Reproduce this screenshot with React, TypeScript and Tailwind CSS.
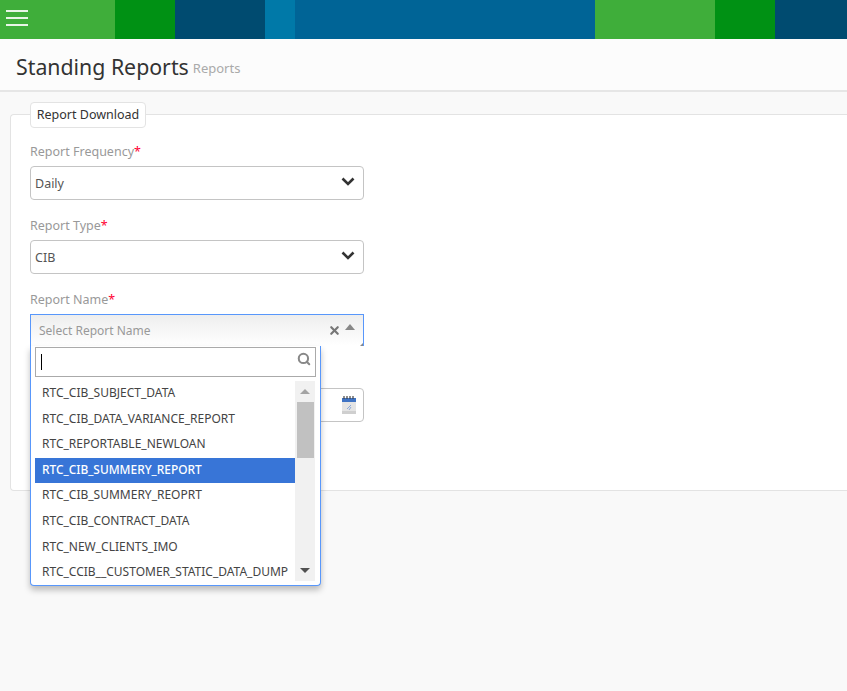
import { Search, X } from 'lucide-react';

const reports = [
  'RTC_CIB_SUBJECT_DATA',
  'RTC_CIB_DATA_VARIANCE_REPORT',
  'RTC_REPORTABLE_NEWLOAN',
  'RTC_CIB_SUMMERY_REPORT',
  'RTC_CIB_SUMMERY_REOPRT',
  'RTC_CIB_CONTRACT_DATA',
  'RTC_NEW_CLIENTS_IMO',
  'RTC_CCIB__CUSTOMER_STATIC_DATA_DUMP',
];

function Label({ text }: { text: string }) {
  return (
    <div className="h-[20px] pt-[1px] text-[12.5px] leading-[20px] text-[#999999]">
      {text}
      <span className="text-[#ff0033]">*</span>
    </div>
  );
}

function SelectBox({ value }: { value: string }) {
  return (
    <div className="mt-[5px] flex h-[34px] w-[334px] items-center justify-between rounded-[4px] border border-[#c4c4c4] bg-white pl-[4px] pr-[8px] text-[12.5px] text-[#555555]">
      <span className="mt-[2px]">{value}</span>
      <svg width="14" height="9" viewBox="0 0 14 9" className="-mt-[3px]">
        <path d="M1.5 1.5L7 7l5.5-5.5" fill="none" stroke="#333333" strokeWidth="2.6" />
      </svg>
    </div>
  );
}

function CalendarIcon() {
  return (
    <svg width="14" height="18" viewBox="0 0 14 18">
      <rect x="0" y="3" width="14" height="15" fill="#e4e4e4" />
      <rect x="0" y="2" width="14" height="4" fill="#3f73c4" />
      <path d="M2 0v3M5 0v3M8 0v3M11 0v3" stroke="#444444" strokeWidth="1.2" />
      <path d="M5 13l4-4M7 14l2-3" stroke="#8aa8d8" strokeWidth="1" />
      <rect x="0" y="15" width="14" height="3" fill="#cfcfcf" />
    </svg>
  );
}

export default function App() {
  return (
    <div className="min-h-[691px] bg-[#f9f9f9] font-['Noto_Sans',sans-serif]">
      <div className="flex h-[39px] w-full">
        <div className="flex w-[115px] items-center bg-[#3fae3a] pl-[6px]">
          <div className="flex w-[22px] flex-col gap-[5px] pb-[3px]">
            <div className="h-[2px] bg-[#e8f5e6]" />
            <div className="h-[2px] bg-[#e8f5e6]" />
            <div className="h-[2px] bg-[#e8f5e6]" />
          </div>
        </div>
        <div className="w-[60px] bg-[#009114]" />
        <div className="w-[90px] bg-[#004b70]" />
        <div className="w-[30px] bg-[#0079a8]" />
        <div className="w-[300px] bg-[#006496]" />
        <div className="w-[120px] bg-[#3fae3a]" />
        <div className="w-[60px] bg-[#009114]" />
        <div className="flex-1 bg-[#004b70]" />
      </div>

      <div className="flex h-[53px] items-center gap-[4px] border-b-2 border-[#e6e6e6] bg-[#fcfcfc] pl-[16px] pt-[4px]">
        <span className="text-[21.3px] text-[#333333]">Standing Reports</span>
        <span className="mt-[5px] text-[13px] text-[#aaaaaa]">Reports</span>
      </div>

      <div className="relative ml-[10px] mt-[22px] h-[377px] rounded-tl-[4px] rounded-bl-[4px] border-y border-l border-[#e3e3e3] bg-white pl-[19px] pt-[26px]">
        <div className="absolute left-[19px] top-[-13px] flex h-[26px] w-[116px] items-center justify-center rounded-[4px] border border-[#e3e3e3] bg-white text-[12.5px] text-[#333333]">
          Report Download
        </div>

        <Label text="Report Frequency" />
        <SelectBox value="Daily" />

        <div className="mt-[15px]">
          <Label text="Report Type" />
          <SelectBox value="CIB" />
        </div>

        <div className="mt-[15px]">
          <Label text="Report Name" />
          <div className="relative mt-[5px] flex h-[32px] w-[334px] items-center justify-between border-x border-t border-[#5897fb] bg-gradient-to-b from-[#eeeeee] to-white pl-[8px] pr-[8px] text-[12px] text-[#999999]">
            <span>Select Report Name</span>
            <div className="flex items-center gap-[4px]">
              <X size={13} strokeWidth={4} className="text-[#777777]" />
              <div className="-mt-[8px] h-0 w-0 border-x-[5px] border-b-[6px] border-x-transparent border-b-[#888888]" />
            </div>
            <div className="absolute bottom-0 right-0 h-0 w-0 border-l-[3px] border-b-[3px] border-l-transparent border-b-[#888888]" />
          </div>
        </div>

        <div className="mt-[42px] flex h-[34px] w-[334px] items-center justify-end rounded-[4px] border border-[#c4c4c4] bg-white pr-[7px]">
          <CalendarIcon />
        </div>

        <div className="absolute left-[19px] top-[231px] z-10 h-[240px] w-[291px] rounded-b-[4px] border-x border-b border-[#5897fb] bg-white pl-[4px] pt-[1px] shadow-[0_4px_6px_rgba(0,0,0,0.25)]">
          <div className="flex h-[30px] w-[281px] items-center justify-between border border-[#aaaaaa] bg-white pl-[5px] pr-[4px]">
            <div className="h-[16px] w-px bg-black" />
            <Search size={14} strokeWidth={3.5} className="-mt-[6px] text-[#888888]" />
          </div>
          <div className="mt-[4px] flex w-[280px]">
            <div className="w-[260px]">
              {reports.map((name) => (
                <div
                  key={name}
                  className={
                    name === 'RTC_CIB_SUMMERY_REPORT'
                      ? 'h-[25.6px] whitespace-nowrap bg-[#3875d7] pl-[7px] text-[11.9px] font-medium leading-[23px] text-white'
                      : 'h-[25.6px] whitespace-nowrap pl-[7px] text-[12px] leading-[24px] text-[#444444]'
                  }
                >
                  {name}
                </div>
              ))}
            </div>
            <div className="flex h-[200px] w-[20px] flex-col items-center bg-[#f1f1f1]">
              <div className="mb-[8px] mt-[8px] h-0 w-0 border-x-[5px] border-b-[5px] border-x-transparent border-b-[#a3a3a3]" />
              <div className="h-[56px] w-[17px] bg-[#c1c1c1]" />
              <div className="flex-1" />
              <div className="mb-[8px] h-0 w-0 border-x-[5px] border-t-[5px] border-x-transparent border-t-[#505050]" />
            </div>
          </div>
        </div>
      </div>
    </div>
  );
}
